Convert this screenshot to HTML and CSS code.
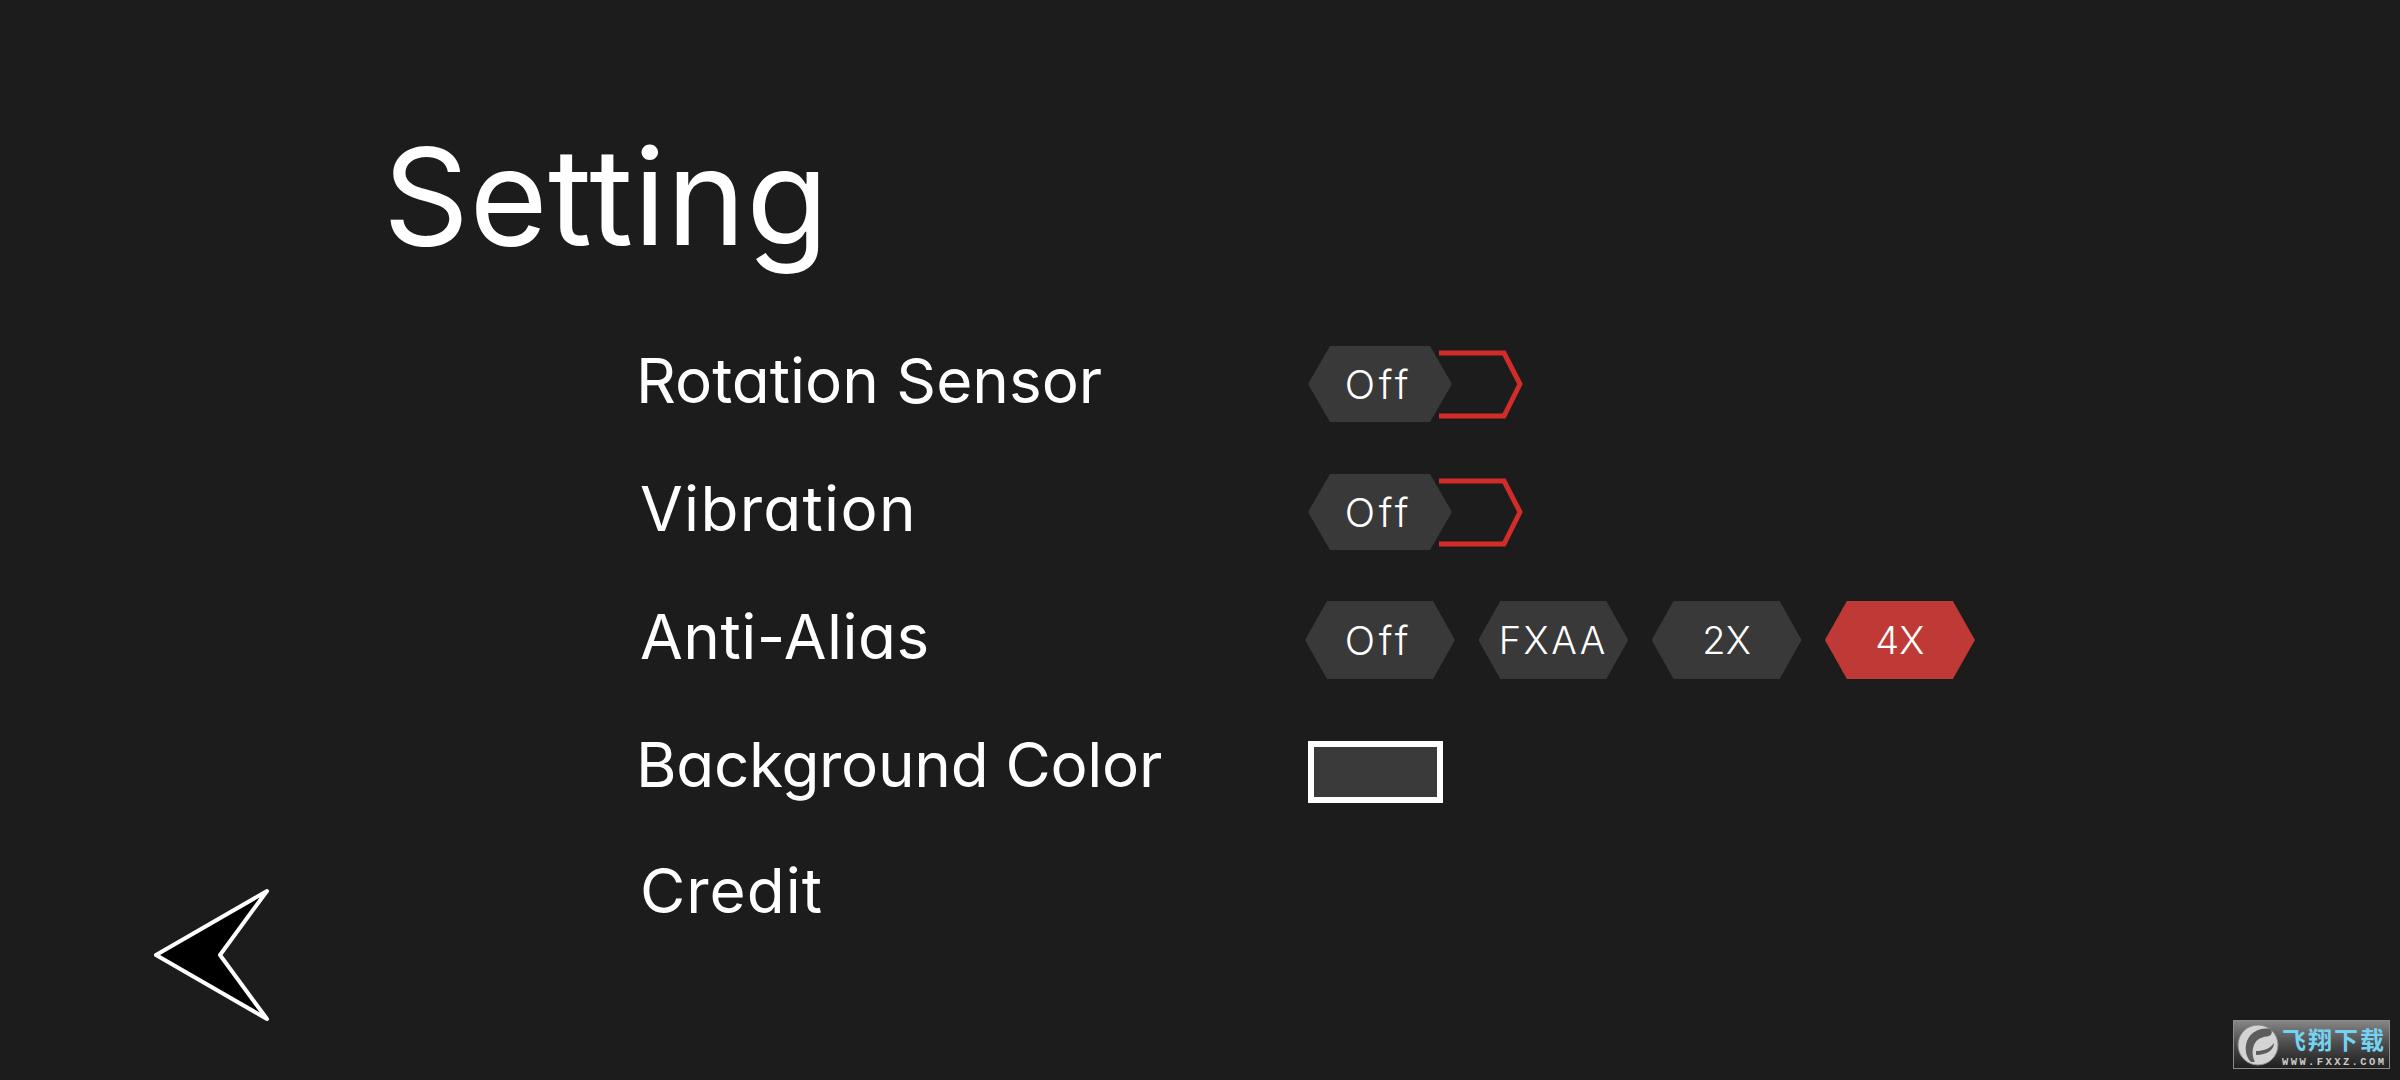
FILE: index.html
```html
<!DOCTYPE html>
<html>
<head>
    <title>Setting</title>
    <link rel="stylesheet" href="styles.css">
</head>
<body>
    <div class="page">
        <div class="side">
            <svg class="back" width="120" height="136" viewBox="0 0 120 136">
                <path d="M115 2 L4 66 L115 130 L68 66 Z" fill="#000" stroke="#fff" stroke-width="4" stroke-linejoin="round"/>
            </svg>
        </div>
        <div class="main">
            <h1 class="title">Setting</h1>
            <div class="row">
                <div class="label label-rotation">Rotation Sensor</div>
                <div class="toggle">
                    <div class="hex hex-off">Off</div>
                    <svg class="toggle-off" width="86" height="76" viewBox="0 0 86 76">
                        <path d="M0 7 H65 L81 38 L65 70 H0" fill="none" stroke="#d22c28" stroke-width="5"/>
                    </svg>
                </div>
            </div>
            <div class="row">
                <div class="label label-vibration">Vibration</div>
                <div class="toggle">
                    <div class="hex hex-off">Off</div>
                    <svg class="toggle-off" width="86" height="76" viewBox="0 0 86 76">
                        <path d="M0 7 H65 L81 38 L65 70 H0" fill="none" stroke="#d22c28" stroke-width="5"/>
                    </svg>
                </div>
            </div>
            <div class="row">
                <div class="label label-alias">Anti-Alias</div>
                <div class="options">
                    <div class="hex hex-wide hex-off">Off</div>
                    <div class="hex hex-wide hex-fxaa">FXAA</div>
                    <div class="hex hex-wide">2X</div>
                    <div class="hex hex-wide active">4X</div>
                </div>
            </div>
            <div class="row">
                <div class="label label-background">Background Color</div>
                <div class="swatch"></div>
            </div>
            <div class="row row-last">
                <div class="label label-credit">Credit</div>
            </div>
        </div>
        <div class="watermark">
            <svg class="mark-logo" width="42" height="42" viewBox="0 0 42 42">
                <circle cx="21" cy="21" r="20" fill="#d4d4d4" stroke="#8a8a8a" stroke-width="1"/>
                <path d="M33 5 C24 3 11 8 9 21 C8 28 10 34 14 38 L18 38 C15 32 15 26 17 21 C20 14 26 13 32 12 C35 11 36 7 33 5 Z" fill="#5c5c5c"/>
                <path d="M19 27 C26 27 33 25 37 19 C37 26 30 31 19 31 Z" fill="#5c5c5c"/>
            </svg>
            <div class="mark-text">
                <div class="mark-name">飞翔下载</div>
                <div class="mark-url">WWW.FXXZ.COM</div>
            </div>
        </div>
    </div>
</body>
</html>
```

FILE: styles.css
```css
html, body {
    margin: 0;
    padding: 0;
}
body {
    font-family: Inter, "Noto Sans", sans-serif;
    font-feature-settings: "cv11";
    background-color: #1c1c1c;
    color: #fff;
}
.page {
    display: flex;
    height: 1080px;
    overflow: hidden;
}
.side {
    width: 383px;
    flex: none;
    display: flex;
    align-items: flex-end;
    padding-left: 152px;
    padding-bottom: 55px;
    box-sizing: border-box;
}
.main {
    flex: 1;
}
.title {
    margin: 0 0 57px;
    padding-top: 129px;
    font-size: 134px;
    line-height: 134px;
    font-weight: 400;
    letter-spacing: 0.5px;
}
.row {
    display: flex;
    align-items: center;
    height: 128px;
    padding-left: 253px;
}
.row-last {
    height: 124px;
}
.label {
    width: 668px;
    flex: none;
    box-sizing: border-box;
    padding-left: 4px;
    padding-bottom: 6px;
    font-size: 62px;
    line-height: 62px;
    font-weight: 400;
}
.label-rotation {
    padding-left: 0;
}
.label-vibration {
    letter-spacing: 1.3px;
}
.label-alias {
    letter-spacing: 0.5px;
}
.label-background {
    padding-left: 0;
    letter-spacing: -0.3px;
}
.label-credit {
    letter-spacing: 1px;
}
.toggle {
    display: flex;
    align-items: center;
    margin-left: 4px;
}
.toggle-off {
    margin-left: -13px;
}
.hex {
    width: 144px;
    height: 76px;
    display: flex;
    align-items: center;
    justify-content: center;
    font-size: 38px;
    font-weight: 300;
    background-color: #393939;
    clip-path: polygon(22px 0, calc(100% - 22px) 0, 100% 50%, calc(100% - 22px) 100%, 22px 100%, 0 50%);
}
.hex-off {
    font-size: 40px;
    letter-spacing: 3.5px;
    padding-right: 3px;
    box-sizing: border-box;
}
.hex-fxaa {
    letter-spacing: 2.5px;
}
.options {
    display: flex;
    gap: 23.3px;
    margin-left: 1px;
}
.hex-wide {
    width: 150px;
    height: 78px;
}
.active {
    background-color: #bf3a36;
}
.swatch {
    width: 135px;
    height: 62px;
    margin: 8px 0 0 4px;
    box-sizing: border-box;
    border: 6px solid #fff;
    background-color: #3a3a3a;
}
.watermark {
    flex: none;
    align-self: flex-end;
    display: flex;
    align-items: center;
    gap: 3px;
    width: 157px;
    height: 49px;
    margin: 0 10px 11px 0;
    padding-left: 3px;
    box-sizing: border-box;
    border: 1px solid #8c8c8c;
    background: linear-gradient(#858585, #4a4a4a 50%, #1f1f1f);
}
.mark-text {
    align-self: flex-start;
}
.mark-name {
    font-family: "Noto Sans CJK SC", sans-serif;
    font-size: 24px;
    line-height: 35px;
    font-weight: 700;
    letter-spacing: 2px;
    color: #74d2f2;
}
.mark-url {
    font-family: "Liberation Mono", monospace;
    font-size: 10.5px;
    line-height: 12px;
    font-weight: 700;
    color: #ccc;
    letter-spacing: 2.4px;
}
```
